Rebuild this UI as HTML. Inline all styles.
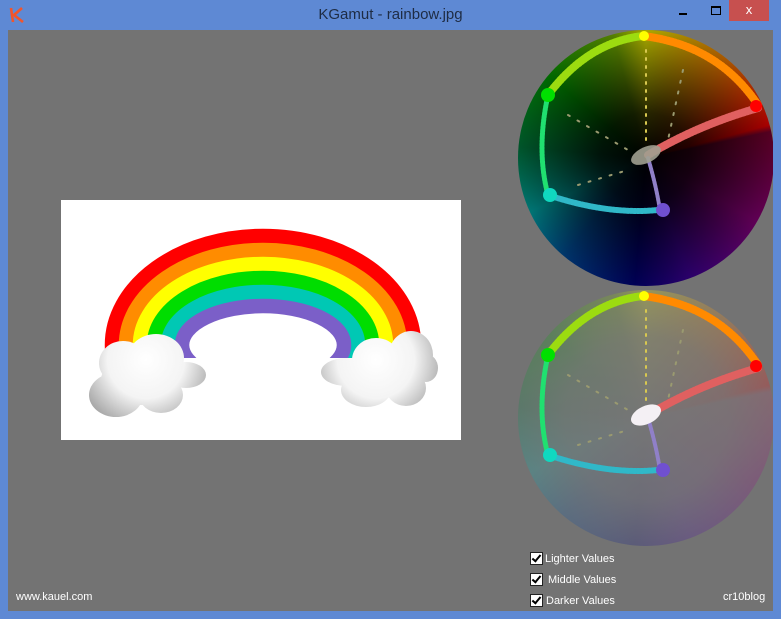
<!DOCTYPE html>
<html><head><meta charset="utf-8"><style>
html,body{margin:0;padding:0;width:781px;height:619px;overflow:hidden;background:#5e89d4;font-family:"Liberation Sans",sans-serif}
.title{position:absolute;left:0;top:0;width:781px;height:30px;text-align:center;line-height:30px;font-size:15px;color:#1e2c44}
.client{position:absolute;left:8px;top:30px;width:765px;height:581px;background:#737373;overflow:hidden}
.img{position:absolute;left:53px;top:170px;width:400px;height:240px;background:#fff}
.sph{position:absolute;left:510px;width:256px;height:256px;border-radius:50%}
.t{top:0}
.b{top:260px}
.lbl{position:absolute;color:#fff;font-size:11px}
.cb{position:absolute;left:522px;width:11px;height:11px;background:#fff;border:1px solid #222}
.cb:after{content:"";position:absolute;left:3px;top:0px;width:3px;height:7px;border:solid #000;border-width:0 2px 2px 0;transform:rotate(40deg)}
</style></head><body>
<svg style="position:absolute;left:9px;top:7px" width="18" height="16"><path d="M2 1 L4 15 M13 1 L5 8 L14 15" stroke="#f2552c" stroke-width="2.6" fill="none"/></svg>
<div class="title">KGamut - rainbow.jpg</div>
<div style="position:absolute;left:679px;top:13px;width:8px;height:2px;background:#000"></div>
<div style="position:absolute;left:711px;top:6px;width:8px;height:6px;border:1px solid #000;border-top-width:2px"></div>
<div style="position:absolute;left:729px;top:0;width:40px;height:21px;background:#c7504f;color:#fff;text-align:center;line-height:20px;font-size:13px">x</div>
<div class="client">
 <div class="img">
  <svg width="400" height="240" viewBox="0 0 400 240">
   <defs>
    <radialGradient id="cl" gradientUnits="userSpaceOnUse" cx="85" cy="160" r="70"><stop offset="0" stop-color="#fff"/><stop offset="0.55" stop-color="#f4f4f4"/><stop offset="1" stop-color="#a8a8a8"/></radialGradient>
    <radialGradient id="cr" gradientUnits="userSpaceOnUse" cx="315" cy="160" r="70"><stop offset="0" stop-color="#fff"/><stop offset="0.55" stop-color="#f4f4f4"/><stop offset="1" stop-color="#a8a8a8"/></radialGradient>
   </defs>
   <g fill="none" stroke-width="14.5" transform="translate(202,145)">
    <ellipse rx="151" ry="109" stroke="#ff0000"/>
    <ellipse rx="137" ry="95" stroke="#ff8c00"/>
    <ellipse rx="123" ry="81" stroke="#ffff00"/>
    <ellipse rx="109" ry="67" stroke="#00dd00"/>
    <ellipse rx="95" ry="53" stroke="#00c8b4"/>
    <ellipse rx="81" ry="39" stroke="#7b5fc8"/>
   </g>
   <rect x="0" y="158" width="400" height="82" fill="#fff"/>
   <g fill="url(#cl)">
    <ellipse cx="62" cy="163" rx="24" ry="22"/><ellipse cx="95" cy="158" rx="28" ry="24"/><ellipse cx="125" cy="175" rx="20" ry="13"/><ellipse cx="55" cy="195" rx="27" ry="22"/><ellipse cx="100" cy="195" rx="22" ry="18"/><ellipse cx="80" cy="180" rx="40" ry="25"/>
   </g>
   <g fill="url(#cr)">
    <ellipse cx="285" cy="172" rx="25" ry="14"/><ellipse cx="315" cy="160" rx="24" ry="22"/><ellipse cx="350" cy="155" rx="22" ry="24"/><ellipse cx="365" cy="168" rx="12" ry="14"/><ellipse cx="345" cy="188" rx="20" ry="18"/><ellipse cx="305" cy="190" rx="25" ry="17"/><ellipse cx="320" cy="178" rx="40" ry="20"/>
   </g>
  </svg>
 </div>
 <div class="sph t" style="background:radial-gradient(circle,rgba(0,0,0,1) 0%,rgba(0,0,0,.85) 25%,rgba(0,0,0,.4) 65%,rgba(0,0,0,0) 100%),conic-gradient(#ffff00 0deg,#ff8000 40deg,#ff0000 75deg,#800030 78deg,#900080 120deg,#4000a0 160deg,#000080 185deg,#0050a0 220deg,#00b0b0 245deg,#008040 275deg,#00a000 310deg,#80c000 345deg,#ffff00 360deg)"></div>
 <div class="sph b" style="background:radial-gradient(circle,rgba(118,118,118,1) 0%,rgba(118,118,118,.92) 45%,rgba(118,118,118,.6) 100%),conic-gradient(#ffff00 0deg,#ff8000 40deg,#ff0000 75deg,#b04060 78deg,#900080 120deg,#4000a0 160deg,#000080 185deg,#0050a0 220deg,#00b0b0 245deg,#008040 275deg,#00a000 310deg,#80c000 345deg,#ffff00 360deg)"></div>
 <svg style="position:absolute;left:510px;top:0" width="256" height="520" viewBox="0 0 256 520">
  <defs><g id="pc" fill="none" stroke-linecap="round" stroke-dasharray="2 1.5">
   <path d="M125 6 Q70 12 30 65" stroke="#9cdc10" stroke-width="8"/>
   <path d="M30 65 Q18 120 30 165" stroke="#20e070" stroke-width="5"/>
   <path d="M30 165 Q90 185 140 180" stroke="#30b8c8" stroke-width="6"/>
   <path d="M125 6 Q200 15 240 75" stroke="#ff8a00" stroke-width="8"/>
   <path d="M240 78 Q180 95 130 125" stroke="#e06060" stroke-width="8"/>
   <path d="M130 128 Q138 155 142 180" stroke="#9080c8" stroke-width="4"/>
   <path d="M128 20 L128 115" stroke="#d8c850" stroke-width="2" stroke-dasharray="2 6"/>
   <path d="M50 85 L110 120 M60 155 L110 140 M165 40 L150 110" stroke="#9a9a70" stroke-width="2" stroke-dasharray="2 9"/>
   <circle cx="30" cy="65" r="7" fill="#00e000" stroke="none"/>
   <circle cx="32" cy="165" r="7" fill="#10d8c0" stroke="none"/>
   <circle cx="238" cy="76" r="6" fill="#ff0000" stroke="none"/>
   <circle cx="145" cy="180" r="7" fill="#7050d0" stroke="none"/>
   <circle cx="126" cy="6" r="5" fill="#ffff00" stroke="none"/>
  </g></defs>
  <use href="#pc"/>
  <ellipse cx="128" cy="125" rx="16" ry="8" transform="rotate(-25 128 125)" fill="#a0a090" opacity=".9"/>
  <use href="#pc" transform="translate(0,260)"/>
  <ellipse cx="128" cy="385" rx="16" ry="9" transform="rotate(-25 128 385)" fill="#f4f0f4"/>
 </svg>
 <div class="cb" style="top:522px"></div><div class="lbl" style="left:537px;top:523px">Lighter Values</div>
 <div class="cb" style="top:543px"></div><div class="lbl" style="left:540px;top:544px">Middle Values</div>
 <div class="cb" style="top:564px"></div><div class="lbl" style="left:538px;top:565px">Darker Values</div>
 <div class="lbl" style="left:8px;top:561px">www.kauel.com</div>
 <div class="lbl" style="left:715px;top:561px">cr10blog</div>
</div>
</body></html>
